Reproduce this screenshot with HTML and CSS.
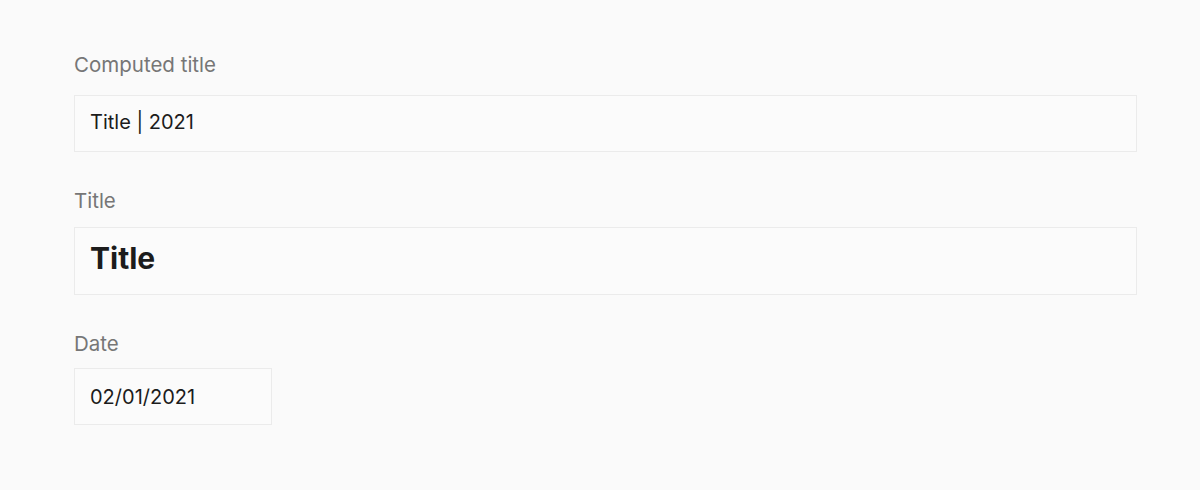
FILE: index.html
```html
<!DOCTYPE html>
<html>
<head>
<meta charset="utf-8">
<link rel="stylesheet" href="styles.css">
</head>
<body>
<main class="form">
  <div class="field field-computed">
    <div class="label">Computed title</div>
    <div class="box">Title | 2021</div>
  </div>
  <div class="field field-title">
    <div class="label">Title</div>
    <div class="box box-title">Title</div>
  </div>
  <div class="field field-date">
    <div class="label">Date</div>
    <div class="box box-date">02/01/2021</div>
  </div>
</main>
</body>
</html>
```

FILE: styles.css
```css
html, body {
  margin: 0;
  padding: 0;
  background: #fafafa;
}
body {
  font-family: Inter, "Noto Sans", sans-serif;
  width: 1200px;
  height: 490px;
  overflow: hidden;
}
.form {
  display: flex;
  flex-direction: column;
  padding: 53px 63px 0 74px;
}
.label {
  font-size: 20.5px;
  line-height: 24px;
  font-weight: 400;
  color: #767676;
}
.box {
  box-sizing: border-box;
  display: flex;
  align-items: center;
  height: 57px;
  padding: 0 15px 3px 15px;
  border: 1px solid #ebebeb;
  background: #fbfbfb;
  font-size: 20px;
  line-height: 24px;
  color: #1c1c1c;
}
.field-computed .box { margin-top: 18px; }
.field-title { margin-top: 37px; }
.field-title .box { margin-top: 14px; }
.field-date { margin-top: 37px; }
.field-date .box { margin-top: 12px; }
.box-title {
  height: 68px;
  padding-bottom: 6px;
  font-size: 30px;
  font-weight: 700;
  line-height: 36px;
}
.box-date {
  width: 198px;
  padding-bottom: 0;
}
```
